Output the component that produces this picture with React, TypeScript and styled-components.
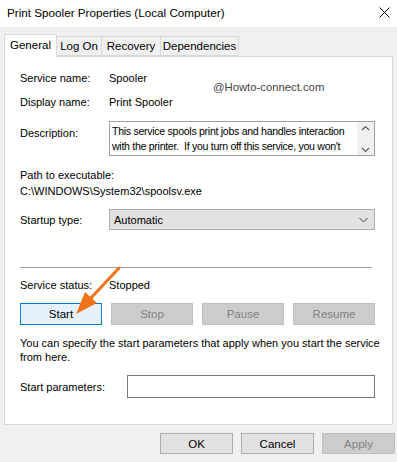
import React from "react";
import styled, { createGlobalStyle } from "styled-components";

const Global = createGlobalStyle`
  html, body { margin: 0; padding: 0; background: #f0f0f0; }
  * { box-sizing: border-box; }
`;

const Window = styled.div`
  width: 397px;
  height: 462px;
  background: #f0f0f0;
  display: flex;
  flex-direction: column;
  font-family: "Liberation Sans", Arial, sans-serif;
  font-size: 11px;
  color: #000;
  overflow: hidden;
`;

const TitleBar = styled.div`
  height: 27px;
  background: #fff;
  display: flex;
  align-items: center;
  justify-content: space-between;
  padding: 0 6px 2px 7px;
  font-size: 11.7px;
`;

const CloseIcon = styled.svg`
  width: 11px;
  height: 11px;
  margin-right: 1px;
`;

const TabStrip = styled.div`
  display: flex;
  align-items: flex-end;
  height: 23px;
  margin-top: 6px;
  padding-left: 4px;
  position: relative;
  z-index: 1;
`;

const Tab = styled.div<{ $active?: boolean; $w: number }>`
  width: ${(p) => p.$w}px;
  height: ${(p) => (p.$active ? 23 : 20)}px;
  margin-bottom: ${(p) => (p.$active ? -1 : 0)}px;
  background: ${(p) => (p.$active ? "#fff" : "#f0f0f0")};
  border: 1px solid #d9d9d9;
  border-bottom: ${(p) => (p.$active ? "none" : "1px solid #d9d9d9")};
  margin-left: ${(p) => (p.$active ? 0 : -1)}px;
  display: flex;
  align-items: center;
  justify-content: center;
  padding-bottom: ${(p) => (p.$active ? 2 : 0)}px;
  font-size: 11.5px;
`;

const Panel = styled.div`
  margin: 0 4px;
  height: 369px;
  background: #fff;
  border: 1px solid #d9d9d9;
  padding: 0 0 0 15px;
  display: flex;
  flex-direction: column;
  position: relative;
`;

const Row = styled.div<{ $mt: number; $top?: boolean }>`
  display: flex;
  align-items: ${(p) => (p.$top ? "flex-start" : "center")};
  margin-top: ${(p) => p.$mt}px;
  line-height: 14px;
`;

const Label = styled.div<{ $w?: number; $pt?: number }>`
  width: ${(p) => p.$w ?? 89}px;
  flex-shrink: 0;
  padding-top: ${(p) => p.$pt ?? 0}px;
`;

const TextLine = styled.div<{ $mt: number }>`
  margin-top: ${(p) => p.$mt}px;
  line-height: 14px;
`;

const DescBox = styled.div`
  width: 266px;
  height: 35px;
  border: 1px solid #a0a0a0;
  display: flex;
  background: #fff;
`;

const DescText = styled.div`
  flex: 1;
  overflow: hidden;
  padding: 2px 0 0 2px;
  line-height: 15px;
  white-space: nowrap;
  font-size: 10.6px;
  letter-spacing: -0.3px;
`;

const ScrollBar = styled.div`
  width: 17px;
  background: #f0f0f0;
  display: flex;
  flex-direction: column;
  justify-content: space-between;
  align-items: center;
  padding: 3px 0 2px;
`;

const Chevron = styled.svg`
  width: 9px;
  height: 6px;
`;

const Select = styled.div`
  width: 266px;
  height: 21px;
  background: #e1e1e1;
  border: 1px solid #adadad;
  display: flex;
  align-items: center;
  justify-content: space-between;
  padding: 0 6px 0 4px;
`;

const Separator = styled.div`
  margin-top: 37px;
  width: 352px;
  height: 1px;
  background: #a0a0a0;
`;

const ButtonGrid = styled.div`
  margin-top: 11px;
  display: grid;
  grid-template-columns: repeat(4, 82px);
  column-gap: 9px;
`;

const Button = styled.div<{ $variant: "focus" | "disabled" | "normal"; $w?: number }>`
  height: ${(p) => (p.$w ? 21 : 22)}px;
  ${(p) => (p.$w ? `width: ${p.$w}px;` : "")}
  display: flex;
  align-items: center;
  justify-content: center;
  font-size: 11.5px;
  border: 1px solid
    ${(p) => (p.$variant === "focus" ? "#0078d7" : p.$variant === "disabled" ? "#bfbfbf" : "#adadad")};
  background: ${(p) => (p.$variant === "focus" ? "#e5f1fb" : p.$variant === "disabled" ? "#cccccc" : "#e1e1e1")};
  color: ${(p) => (p.$variant === "disabled" ? "#838383" : "#000")};
`;

const Paragraph = styled.div`
  margin-top: 11px;
  line-height: 14px;
`;

const Input = styled.div`
  width: 248px;
  height: 23px;
  border: 1px solid #7a7a7a;
  background: #fff;
`;

const Footer = styled.div`
  display: flex;
  justify-content: flex-end;
  gap: 8px;
  margin-top: 8px;
  padding-right: 2px;
`;

const Watermark = styled.div`
  position: absolute;
  left: 208px;
  top: 24px;
  color: #444;
  font-size: 11.3px;
`;

const Arrow = styled.svg`
  position: absolute;
  left: 0;
  top: 0;
  width: 391px;
  height: 369px;
  pointer-events: none;
  overflow: visible;
`;

export default function App() {
  return (
    <>
      <Global />
      <Window>
        <TitleBar>
          <span>Print Spooler Properties (Local Computer)</span>
          <CloseIcon viewBox="0 0 11 11">
            <path d="M0.5 0.5 L10.5 10.5 M10.5 0.5 L0.5 10.5" stroke="#000" strokeWidth="1" fill="none" />
          </CloseIcon>
        </TitleBar>
        <TabStrip>
          <Tab $active $w={53}>General</Tab>
          <Tab $w={46}>Log On</Tab>
          <Tab $w={60}>Recovery</Tab>
          <Tab $w={79}>Dependencies</Tab>
        </TabStrip>
        <Panel>
          <Watermark>@Howto-connect.com</Watermark>
          <Row $mt={14}>
            <Label>Service name:</Label>
            <span>Spooler</span>
          </Row>
          <Row $mt={10}>
            <Label>Display name:</Label>
            <span>Print Spooler</span>
          </Row>
          <Row $mt={12} $top>
            <Label $pt={5}>Description:</Label>
            <DescBox>
              <DescText>
                This service spools print jobs and handles interaction
                <br />
                with the printer.&nbsp; If you turn off this service, you won't
              </DescText>
              <ScrollBar>
                <Chevron viewBox="0 0 9 6">
                  <path d="M1 5 L4.5 1.5 L8 5" stroke="#606060" strokeWidth="1.2" fill="none" />
                </Chevron>
                <Chevron viewBox="0 0 9 6">
                  <path d="M1 1 L4.5 4.5 L8 1" stroke="#606060" strokeWidth="1.2" fill="none" />
                </Chevron>
              </ScrollBar>
            </DescBox>
          </Row>
          <TextLine $mt={12}>Path to executable:</TextLine>
          <TextLine $mt={2}>C:\WINDOWS\System32\spoolsv.exe</TextLine>
          <Row $mt={11}>
            <Label>Startup type:</Label>
            <Select>
              <span>Automatic</span>
              <Chevron viewBox="0 0 9 6">
                <path d="M0.5 1 L4.5 5 L8.5 1" stroke="#404040" strokeWidth="1" fill="none" />
              </Chevron>
            </Select>
          </Row>
          <Separator />
          <Row $mt={10}>
            <Label>Service status:</Label>
            <span>Stopped</span>
          </Row>
          <ButtonGrid>
            <Button $variant="focus">Start</Button>
            <Button $variant="disabled">Stop</Button>
            <Button $variant="disabled">Pause</Button>
            <Button $variant="disabled">Resume</Button>
          </ButtonGrid>
          <Paragraph>
            You can specify the start parameters that apply when you start the service
            <br />
            from here.
          </Paragraph>
          <Row $mt={11}>
            <Label $w={107}>Start parameters:</Label>
            <Input />
          </Row>
          <Arrow viewBox="0 0 391 369">
            <line x1="114" y1="211" x2="86" y2="241" stroke="#f07318" strokeWidth="3" strokeLinecap="round" />
            <polygon points="71,257 80,235 92,246" fill="#f07318" />
          </Arrow>
        </Panel>
        <Footer>
          <Button $variant="normal" $w={73}>OK</Button>
          <Button $variant="normal" $w={73}>Cancel</Button>
          <Button $variant="disabled" $w={73}>Apply</Button>
        </Footer>
      </Window>
    </>
  );
}
